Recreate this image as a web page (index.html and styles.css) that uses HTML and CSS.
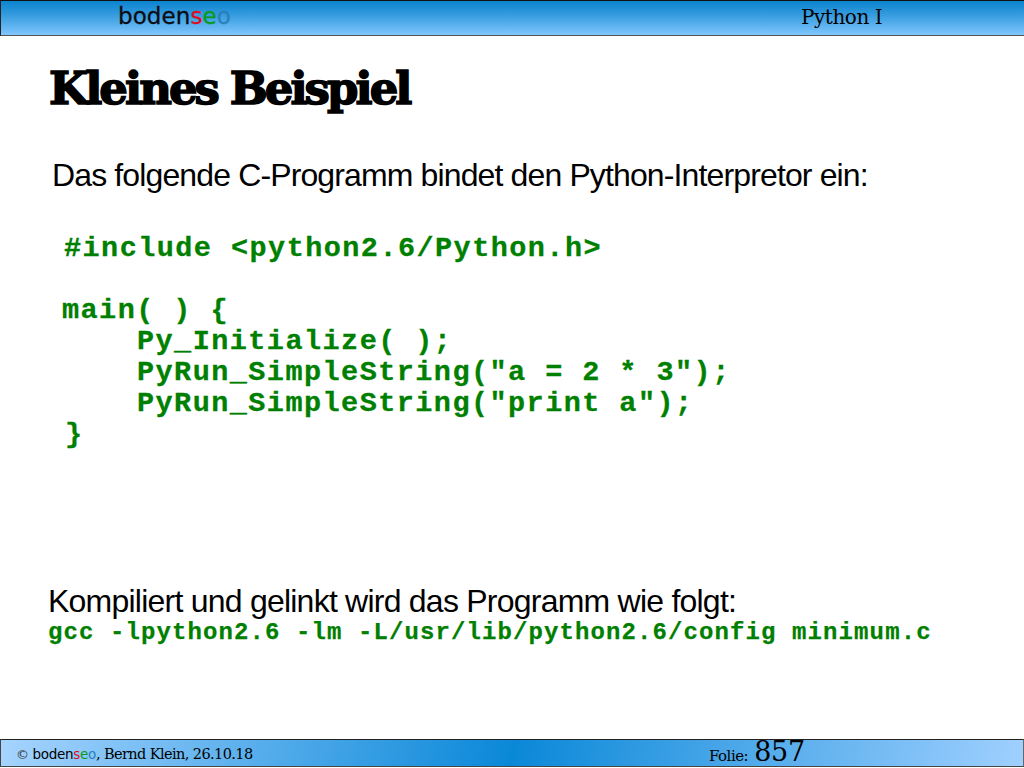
FILE: index.html
```html
<!DOCTYPE html>
<html lang="de">
<head>
<meta charset="utf-8">
<title>Kleines Beispiel</title>
<link rel="stylesheet" href="styles.css">
</head>
<body>
<div class="slide">
  <header class="topbar">
    <div class="logo">boden<span class="red">s</span><span class="green">e</span><span class="blue">o</span></div>
    <div class="course">Python I</div>
  </header>
  <main class="content">
    <h1 class="title">Kleines Beispiel</h1>
    <p class="intro">Das folgende C-Programm bindet den Python-Interpretor ein:</p>
    <div class="code">
      <div class="line-include">#include &lt;python2.6/Python.h&gt;</div>
      <div class="line-blank">&nbsp;</div>
      <div class="line-main">main( ) {</div>
      <div class="line-body">Py_Initialize( );</div>
      <div class="line-body">PyRun_SimpleString("a = 2 * 3");</div>
      <div class="line-body">PyRun_SimpleString("print a");</div>
      <div class="line-end">}</div>
    </div>
    <p class="compile">Kompiliert und gelinkt wird das Programm wie folgt:</p>
    <div class="command">gcc -lpython2.6 -lm -L/usr/lib/python2.6/config minimum.c</div>
  </main>
  <footer class="bottombar">
    <div class="credit"><span class="copy">©</span> <span class="footlogo">boden<span class="red">s</span><span class="green">e</span><span class="blue">o</span></span>, Bernd Klein, 26.10.18</div>
    <div class="folie"><span class="folie-label">Folie:</span><span class="folie-num">857</span></div>
  </footer>
</div>
</body>
</html>
```
FILE: styles.css
```css
html, body {
  margin: 0;
  padding: 0;
  background: #fff;
}
.slide {
  width: 1024px;
  height: 768px;
  display: flex;
  flex-direction: column;
  overflow: hidden;
  color: #000;
}
.topbar {
  flex: none;
  box-sizing: border-box;
  height: 36px;
  border-top: 1px solid #111;
  border-left: 1px solid #222;
  border-bottom: 1px solid #555;
  background: linear-gradient(180deg, #0a84cf 0%, #3a9ee0 45%, #80c6ff 100%);
  display: flex;
  align-items: center;
  position: relative;
}
.logo {
  margin-left: 117px;
  margin-top: -5px;
  font-family: "DejaVu Sans", sans-serif;
  font-size: 23px;
  line-height: 30px;
  letter-spacing: 0.1px;
  color: #0c0c14;
  -webkit-text-stroke: 0.3px currentColor;
}
.red { color: #e00c1c; }
.green { color: #0a9a1e; }
.blue { color: #2a80bc; }
.course {
  position: absolute;
  left: 800px;
  top: 3px;
  font-family: "DejaVu Serif", serif;
  font-size: 20px;
  line-height: 26px;
  letter-spacing: -0.45px;
}
.content {
  flex: 1;
  min-height: 0;
  padding-left: 48px;
}
.title {
  margin: 23px 0 0 1px;
  font-family: "DejaVu Serif", serif;
  font-weight: 700;
  font-size: 45px;
  line-height: 60px;
  letter-spacing: -2.95px;
  -webkit-text-stroke: 1.6px #000;
}
.intro {
  margin: 36px 0 0 4px;
  font-family: "Liberation Sans", sans-serif;
  font-size: 32px;
  line-height: 40px;
  letter-spacing: -0.87px;
}
.code {
  margin: 38px 0 0 14px;
  font-family: "Liberation Mono", monospace;
  font-weight: 700;
  font-size: 28.5px;
  line-height: 31px;
  letter-spacing: 1.45px;
  color: #008000;
  -webkit-text-stroke: 0.3px #008000;
}
.code div { white-space: pre; }
.line-include { margin-left: 2px; }
.line-body { margin-left: 75px; }
.line-end { margin-left: 3px; }
.compile {
  margin: 133px 0 0 0;
  font-family: "Liberation Sans", sans-serif;
  font-size: 32px;
  line-height: 36px;
  letter-spacing: -0.77px;
}
.command {
  margin-top: 1px;
  font-family: "Liberation Mono", monospace;
  font-weight: 700;
  font-size: 24px;
  line-height: 26px;
  letter-spacing: 1.1px;
  color: #008000;
  -webkit-text-stroke: 0.25px #008000;
  white-space: pre;
}
.bottombar {
  flex: none;
  box-sizing: border-box;
  height: 28px;
  margin-bottom: 1px;
  border: 1px solid #444;
  border-top-color: #222;
  border-right-color: #666;
  background: linear-gradient(100deg, #a6d4ff 0%, #0a88d8 50%, #a0d0ff 100%);
  display: flex;
  align-items: center;
  position: relative;
  font-family: "DejaVu Serif", serif;
}
.credit {
  margin-left: 15px;
  margin-top: 2px;
  font-size: 14.5px;
  letter-spacing: -0.6px;
  line-height: 26px;
}
.copy {
  font-family: "DejaVu Sans", sans-serif;
  font-size: 13px;
  color: #333;
}
.footlogo {
  font-family: "DejaVu Sans", sans-serif;
  font-size: 13.5px;
  letter-spacing: -0.3px;
}
.folie {
  position: absolute;
  left: 708px;
  top: -3px;
  display: flex;
  align-items: baseline;
  gap: 6px;
}
.folie-label {
  font-size: 15px;
  letter-spacing: -0.5px;
}
.folie-num {
  font-size: 27px;
  line-height: 30px;
  letter-spacing: -0.3px;
}
```
